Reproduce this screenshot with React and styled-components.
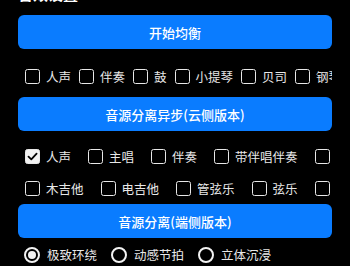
import React from "react";
import styled, { createGlobalStyle } from "styled-components";

const Global = createGlobalStyle`
  html, body { margin: 0; padding: 0; background: #000; }
  body { font-family: "Noto Sans CJK SC", "Noto Sans", sans-serif; overflow: hidden; }
`;

const Page = styled.div`
  width: 314px;
  padding-left: 18px;
  display: flex;
  flex-direction: column;
`;

const Title = styled.div`
  margin-top: -17px;
  height: 21px;
  line-height: 21px;
  font-size: 15px;
  font-weight: 700;
  color: #fff;
`;

const ActionButton = styled.button`
  margin-top: ${(p) => p.$top}px;
  height: 34px;
  width: 100%;
  border: none;
  border-radius: 6px;
  background: #0a7cff;
  color: #fff;
  font-family: inherit;
  font-size: 13px;
  font-weight: 500;
  padding: 0;
  display: flex;
  align-items: center;
  justify-content: center;
`;

const OptionRow = styled.div`
  display: flex;
  align-items: center;
  height: 21px;
  margin-top: ${(p) => p.$top}px;
  padding-left: 7px;
  gap: ${(p) => p.$gap}px;
  overflow: hidden;
  white-space: nowrap;
`;

const Option = styled.label`
  display: flex;
  align-items: center;
  gap: 6px;
  flex: none;
  font-size: 12.5px;
  line-height: 21px;
  color: #e8e8e8;
`;

const Box = styled.span`
  width: 15px;
  height: 15px;
  box-sizing: border-box;
  border: 1.6px solid #e8e8e8;
  border-radius: 2.5px;
  background: ${(p) => (p.$checked ? "#f2f2f2" : "transparent")};
  display: flex;
  align-items: center;
  justify-content: center;
  flex: none;
`;

const RadioRow = styled.div`
  display: flex;
  align-items: center;
  height: 21px;
  margin-top: 6px;
  padding-left: 6px;
  gap: 14px;
`;

const RadioOption = styled.label`
  display: flex;
  align-items: center;
  gap: 7px;
  font-size: 12.5px;
  line-height: 21px;
  color: #e8e8e8;
`;

const Circle = styled.span`
  width: 16px;
  height: 16px;
  box-sizing: border-box;
  border: 2px solid #f2f2f2;
  border-radius: 50%;
  display: flex;
  align-items: center;
  justify-content: center;
  flex: none;
  &::after {
    content: "";
    width: 8px;
    height: 8px;
    border-radius: 50%;
    background: ${(p) => (p.$checked ? "#f2f2f2" : "transparent")};
  }
`;

const Check = () => (
  <svg width="11" height="11" viewBox="0 0 11 11">
    <path d="M1.5 5.6 L4.3 8.3 L9.6 2.6" fill="none" stroke="#000" strokeWidth="1.8" strokeLinecap="round" strokeLinejoin="round" />
  </svg>
);

const CheckOption = ({ label, checked }) => (
  <Option>
    <Box $checked={checked}>{checked && <Check />}</Box>
    {label && <span>{label}</span>}
  </Option>
);

export default function App() {
  return (
    <Page>
      <Global />
      <Title>音效设置</Title>
      <ActionButton $top={11}>开始均衡</ActionButton>
      <OptionRow $top={17} $gap={8}>
        {["人声", "伴奏", "鼓", "小提琴", "贝司", "钢琴"].map((l) => (
          <CheckOption key={l} label={l} />
        ))}
      </OptionRow>
      <ActionButton $top={10}>音源分离异步(云侧版本)</ActionButton>
      <OptionRow $top={15} $gap={17}>
        <CheckOption label="人声" checked />
        {["主唱", "伴奏", "带伴唱伴奏", "其他"].map((l) => (
          <CheckOption key={l} label={l} />
        ))}
      </OptionRow>
      <OptionRow $top={11} $gap={17}>
        {["木吉他", "电吉他", "管弦乐", "弦乐", "打击乐"].map((l) => (
          <CheckOption key={l} label={l} />
        ))}
      </OptionRow>
      <ActionButton $top={5}>音源分离(端侧版本)</ActionButton>
      <RadioRow>
        <RadioOption><Circle $checked />极致环绕</RadioOption>
        <RadioOption><Circle />动感节拍</RadioOption>
        <RadioOption><Circle />立体沉浸</RadioOption>
      </RadioRow>
    </Page>
  );
}
